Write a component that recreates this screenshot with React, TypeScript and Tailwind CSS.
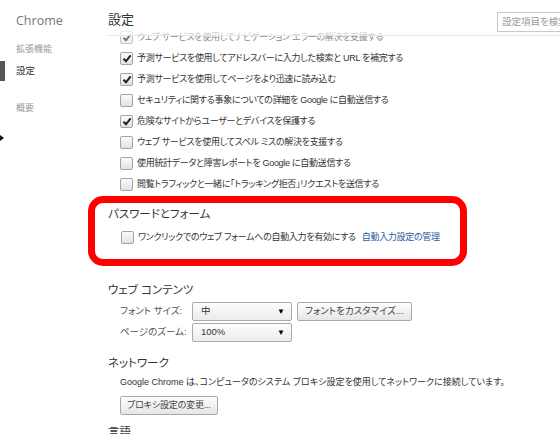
import React from 'react';

const jp = '[font-family:"Liberation_Sans","Noto_Sans_CJK_JP",sans-serif] [font-feature-settings:"palt"]';

const Check = ({ checked }: { checked?: boolean }) => (
  <span className="relative w-[13px] h-[13px] shrink-0 rounded-[2px] border border-[#a3a3a3] bg-gradient-to-b from-[#fbfbfb] to-[#e2e2e2] flex items-center justify-center">
    {checked && (
      <svg width="10" height="9" viewBox="0 0 10 9">
        <path d="M1.5 4.8 L4 7.3 L8.6 1.4" fill="none" stroke="#222" strokeWidth="2" />
      </svg>
    )}
  </span>
);

const rows: [string, boolean][] = [
  ['ウェブ サービスを使用してナビゲーション エラーの解決を支援する', true],
  ['予測サービスを使用してアドレスバーに入力した検索と URL を補完する', true],
  ['予測サービスを使用してページをより迅速に読み込む', true],
  ['セキュリティに関する事象についての詳細を Google に自動送信する', false],
  ['危険なサイトからユーザーとデバイスを保護する', true],
  ['ウェブ サービスを使用してスペル ミスの解決を支援する', false],
  ['使用統計データと障害レポートを Google に自動送信する', false],
  ['閲覧トラフィックと一緒に「トラッキング拒否」リクエストを送信する', false],
];

const Select = ({ value }: { value: string }) => (
  <div className="w-[100px] h-[19px] border border-[#a9a9a9] rounded-[2px] bg-gradient-to-b from-[#fdfdfd] to-[#ececec] flex items-center justify-between pl-[8px] pr-[6px] text-[9.5px] text-[#333]">
    <span>{value}</span>
    <span className="text-[8px] text-black">▼</span>
  </div>
);

const Button = ({ children }: { children: React.ReactNode }) => (
  <div className="h-[19px] px-[7px] border border-[#a9a9a9] rounded-[2px] bg-gradient-to-b from-[#fdfdfd] to-[#e6e6e6] flex items-center text-[9.5px] text-[#444] whitespace-nowrap">
    {children}
  </div>
);

export default function App() {
  return (
    <div className={`w-[560px] h-[434px] overflow-hidden bg-white flex ${jp}`}>
      {/* sidebar */}
      <div className="w-[108px] shrink-0 relative">
        <div className="pl-[16px] pt-[12px] text-[12.5px] text-[#777] leading-[18px] [font-family:'Open_Sans',sans-serif]">Chrome</div>
        <div className="pl-[16px] mt-[11px] text-[9px] text-[#999] leading-[16px]">拡張機能</div>
        <div className="mt-[4px] flex items-center h-[20px]">
          <div className="w-[5px] h-[20px] bg-[#555]" />
          <span className="pl-[11px] text-[9.5px] text-[#333]">設定</span>
        </div>
        <div className="pl-[16px] mt-[19px] text-[9px] text-[#999] leading-[16px]">概要</div>
        <svg className="mt-[19px]" width="4" height="6" viewBox="0 0 4 6">
          <path d="M0 0 L4 3 L0 6 Z" fill="#111" />
        </svg>
      </div>

      {/* main */}
      <div className="relative flex-1">
        <div className="absolute top-0 left-0 right-0 h-[36px] bg-white/60 border-b border-[#e6e6e6] z-10">
          <div className="absolute left-0 top-[9px] text-[13px] text-[#333] leading-[22px] bg-white">設定</div>
          <div className="absolute left-[389px] top-[12px] w-[80px] h-[20px] border border-[#c9c9c9] bg-white flex items-center pl-[4px] text-[9.5px] text-[#999] whitespace-nowrap">
            設定項目を検索
          </div>
        </div>

        <div className="pt-[27px]">
          {rows.map(([t, c], i) => (
            <div key={i} className={`h-[21px] pl-[12px] flex items-center gap-[4px] text-[9px] tracking-[-0.3px] text-[#333] whitespace-nowrap ${i === 0 ? 'opacity-60' : ''}`}>
              <Check checked={c} />
              <span>{t}</span>
            </div>
          ))}
        </div>

        {/* highlighted section */}
        <div className="-ml-[20px] mt-[1px] w-[379px] h-[70px] border-[7px] border-[#ff0000] rounded-[15px] pl-[13px] pt-[3px]">
          <div className="h-[18px] flex items-center text-[11.5px] text-[#333]">パスワードとフォーム</div>
          <div className="mt-[3px] h-[21px] pl-[13px] flex items-center gap-[4px] text-[9px] tracking-[-0.3px] text-[#333] whitespace-nowrap">
            <Check />
            <span>ワンクリックでのウェブ フォームへの自動入力を有効にする</span>
            <span className="ml-[2px] text-[#1f5aa6]">自動入力設定の管理</span>
          </div>
        </div>

        <div className="mt-[15px] h-[20px] flex items-center text-[11.5px] text-[#333]">ウェブ コンテンツ</div>
        <div className="h-[21px] flex items-center text-[9.5px] text-[#555]">
          <span className="w-[84px] pl-[12px] whitespace-nowrap">フォント サイズ:</span>
          <Select value="中" />
          <div className="ml-[5px]">
            <Button>フォントをカスタマイズ...</Button>
          </div>
        </div>
        <div className="h-[21px] flex items-center text-[9.5px] text-[#555]">
          <span className="w-[84px] pl-[12px] whitespace-nowrap">ページのズーム:</span>
          <Select value="100%" />
        </div>

        <div className="mt-[11px] h-[20px] flex items-center text-[11.5px] text-[#333]">ネットワーク</div>
        <div className="h-[18px] pl-[12px] flex items-center text-[9px] text-[#333] whitespace-nowrap">
          Google Chrome は、コンピュータのシステム プロキシ設定を使用してネットワークに接続しています。
        </div>
        <div className="mt-[4px] pl-[12px] flex">
          <div className="h-[19px] px-[6px] border border-[#a9a9a9] rounded-[2px] bg-gradient-to-b from-[#fdfdfd] to-[#e6e6e6] flex items-center text-[9px] tracking-[-0.2px] text-[#444] whitespace-nowrap">
            プロキシ設定の変更...
          </div>
        </div>
        <div className="mt-[8px] h-[20px] flex items-center text-[11.5px] text-[#333]">言語</div>
      </div>
    </div>
  );
}
